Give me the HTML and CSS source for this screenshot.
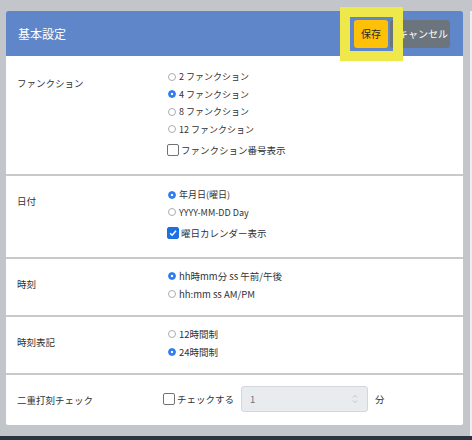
FILE: index.html
```html
<!DOCTYPE html>
<html lang="ja">

<head>
  <meta charset="UTF-8" />
  <title>基本設定</title>
  <link rel="stylesheet" href="styles.css">
</head>

<body>

  <div class="screen">
    <div class="panel">
      <div class="panel-head">
        <h2>基本設定</h2>
        <div class="actions">
          <button class="btn btn-save">保存</button>
          <button class="btn btn-cancel">キャンセル</button>
        </div>
        <span class="highlight"></span>
      </div>

      <div class="row row-loose">
        <div class="label">ファンクション</div>
        <div class="field">
          <label class="opt"><input type="radio" name="fn"> 2 ファンクション</label>
          <label class="opt"><input type="radio" name="fn" checked> 4 ファンクション</label>
          <label class="opt"><input type="radio" name="fn"> 8 ファンクション</label>
          <label class="opt"><input type="radio" name="fn"> 12 ファンクション</label>
          <label class="check"><input type="checkbox">ファンクション番号表示</label>
        </div>
      </div>

      <div class="row row-loose">
        <div class="label">日付</div>
        <div class="field">
          <label class="opt"><input type="radio" name="date" checked> 年月日(曜日)</label>
          <label class="opt"><input type="radio" name="date"> YYYY-MM-DD Day</label>
          <label class="check"><input type="checkbox" checked>曜日カレンダー表示</label>
        </div>
      </div>

      <div class="row row-tight">
        <div class="label">時刻</div>
        <div class="field">
          <label class="opt opt-wide"><input type="radio" name="time" checked> hh時mm分 ss 午前/午後</label>
          <label class="opt opt-wide"><input type="radio" name="time"> hh:mm ss AM/PM</label>
        </div>
      </div>

      <div class="row row-tight">
        <div class="label">時刻表記</div>
        <div class="field">
          <label class="opt opt-wide"><input type="radio" name="clock"> 12時間制</label>
          <label class="opt opt-wide"><input type="radio" name="clock" checked> 24時間制</label>
        </div>
      </div>

      <div class="row row-last">
        <div class="label">二重打刻チェック</div>
        <div class="field field-inline">
          <label class="check"><input type="checkbox">チェックする</label>
          <div class="num">
            <span>1</span>
            <svg class="spin" width="6" height="10" viewBox="0 0 6 10">
              <path d="M1 3.5 L3 1.5 L5 3.5 M1 6.5 L3 8.5 L5 6.5" fill="none" stroke="#b8bcc0" stroke-width="0.9" />
            </svg>
          </div>
          <span class="unit">分</span>
        </div>
      </div>
    </div>

    <div class="edge"></div>
  </div>

  <div class="taskbar"></div>

</body>

</html>
```

FILE: styles.css
```css
body {
  margin: 0;
  height: 440px;
  overflow: hidden;
  background: #c2c6ca;
  font-family: "Noto Sans CJK JP", "Noto Sans", sans-serif;
  color: #2f3236;
}

.screen {
  display: flex;
  height: 436px;
  padding: 11px 0 0 6px;
  box-sizing: border-box;
}

.panel {
  width: 457px;
  height: 414px;
  background: white;
  border-radius: 2px;
}

.edge {
  margin-left: auto;
  width: 2px;
  background: #eceeef;
}

.taskbar {
  height: 4px;
  background: #2b3341;
}

/* header */

.panel-head {
  position: relative;
  height: 45px;
  background: #5f86c9;
  display: flex;
  align-items: center;
  padding: 0 13px 0 12px;
  border-radius: 2px 2px 0 0;
}

.panel-head h2 {
  margin: 0;
  font-size: 12px;
  font-weight: normal;
  color: white;
  flex: 1;
}

.actions {
  display: flex;
  gap: 2px;
}

.btn {
  height: 28px;
  border: none;
  border-radius: 3px;
  font-family: inherit;
  font-size: 10px;
  padding: 0;
}

.btn-save {
  width: 34px;
  background: #ffc107;
  color: #2a2a2a;
}

.btn-cancel {
  width: 60px;
  background: #6c757d;
  color: white;
  padding-left: 6px;
}

.highlight {
  position: absolute;
  left: 334px;
  top: -4px;
  width: 43px;
  height: 34px;
  border: 10px solid #eee84a;
}

/* rows */

.row {
  display: flex;
  border-top: 2px solid #c9c9c9;
}

.row:nth-of-type(2) {
  border-top: none;
  padding-top: 2px;
}

.label {
  width: 149px;
  padding: 16px 0 0 11px;
  font-size: 9.5px;
  line-height: 18px;
}

.field {
  display: flex;
  flex-direction: column;
  padding-left: 1px;
}

.row-loose .field {
  padding-top: 10px;
  padding-bottom: 14px;
}

.row-tight .field {
  padding-top: 8px;
  padding-bottom: 12px;
}

.row-last .field {
  padding-top: 11px;
  padding-bottom: 12px;
}

.opt {
  display: flex;
  align-items: center;
  font-size: 9px;
  line-height: 17.5px;
  padding-left: 1px;
}

.opt-wide {
  font-size: 9.5px;
  line-height: 18px;
}

.opt input {
  appearance: none;
  width: 8px;
  height: 8px;
  margin: 0 3px 0 0;
  border: 1px solid #a9adb1;
  border-radius: 50%;
  background: white;
  box-sizing: border-box;
}

.opt input:checked {
  border-color: #2f7cf0;
  background: radial-gradient(circle, white 0 1.3px, #2f7cf0 1.6px);
}

.check {
  display: flex;
  align-items: center;
  margin-top: 2px;
  font-size: 9.5px;
  line-height: 20px;
}

.check input {
  appearance: none;
  width: 12px;
  height: 12px;
  margin: 0 2px 0 0;
  border: 1px solid #6e7378;
  border-radius: 2px;
  background: white;
  box-sizing: border-box;
}

.check input:checked {
  border-color: #1f6fe0;
  background: #1f6fe0 url("data:image/svg+xml,%3Csvg xmlns='http://www.w3.org/2000/svg' viewBox='0 0 12 12'%3E%3Cpath d='M2.5 6.2 L5 8.6 L9.6 3.4' fill='none' stroke='white' stroke-width='1.8'/%3E%3C/svg%3E") center / 100% no-repeat;
}

.field-inline {
  flex-direction: row;
  align-items: center;
  padding-left: 0;
  margin-left: -3px;
}

.field-inline .check {
  margin-top: 0;
}

.num {
  display: flex;
  align-items: center;
  justify-content: space-between;
  width: 127px;
  height: 26px;
  margin-left: 7px;
  padding: 0 9px 0 8px;
  box-sizing: border-box;
  background: #e9ecef;
  border: 1px solid #d3d7db;
  border-radius: 3px;
  font-size: 9.5px;
  color: #6c7278;
}

.unit {
  margin-left: 7px;
  font-size: 9.5px;
}
```
